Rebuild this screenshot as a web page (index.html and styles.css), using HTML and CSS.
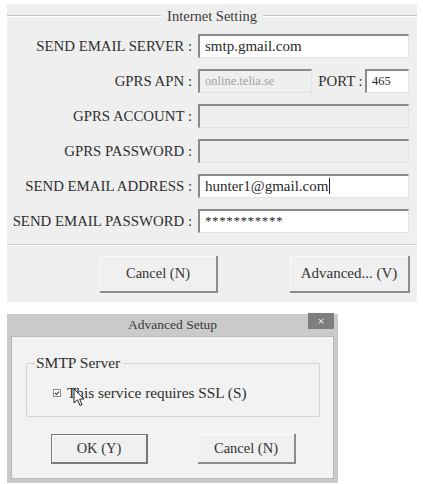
FILE: index.html
```html
<!DOCTYPE html>
<html lang="en">
<head>
    <meta charset="UTF-8">
    <meta name="viewport" content="width=device-width, initial-scale=1.0">
    <title>Internet Setting</title>
    <link rel="stylesheet" href="styles.css">
</head>
<body>
    <div class="settings">
        <div class="group-head">
            <span class="line"></span>
            <span class="group-title">Internet Setting</span>
            <span class="line"></span>
        </div>
        <div class="form">
            <label class="lbl">SEND EMAIL SERVER :</label>
            <div class="field">smtp.gmail.com</div>

            <label class="lbl">GPRS APN :</label>
            <div class="apn-row">
                <div class="field off apn">online.telia.se</div>
                <label class="lbl port-lbl">PORT :</label>
                <div class="field port">465</div>
            </div>

            <label class="lbl">GPRS ACCOUNT :</label>
            <div class="field off"></div>

            <label class="lbl">GPRS PASSWORD :</label>
            <div class="field off"></div>

            <label class="lbl">SEND EMAIL ADDRESS :</label>
            <div class="field"><span class="caret">hunter1@gmail.com</span></div>

            <label class="lbl">SEND EMAIL PASSWORD :</label>
            <div class="field pw">***********</div>
        </div>
        <div class="actions">
            <button class="btn wide">Cancel (N)</button>
            <button class="btn wide adv">Advanced... (V)</button>
        </div>
    </div>

    <div class="dialog">
        <div class="titlebar">
            <span></span>
            <span class="title">Advanced Setup</span>
            <span class="close">&#215;</span>
        </div>
        <div class="dlg-body">
            <fieldset class="smtp">
                <legend>SMTP Server</legend>
                <div class="check">
                    <svg class="box" width="8" height="8" viewBox="0 0 8 8">
                        <rect x="0.5" y="0.5" width="7" height="7" fill="#fff" stroke="#8a8a8a"/>
                        <path d="M2 4 L3.5 5.5 L6 2.5" fill="none" stroke="#555" stroke-width="1.2"/>
                    </svg>
                    <span class="check-text">This service requires SSL (S)</span>
                    <svg class="pointer" width="12" height="19" viewBox="0 0 12 19">
                        <path d="M1 1 L1 15 L4.5 11.8 L7 17.5 L9 16.6 L6.6 11 L11 11 Z" fill="#fff" stroke="#222" stroke-width="1"/>
                    </svg>
                </div>
            </fieldset>
            <div class="dlg-actions">
                <button class="btn small default">OK (Y)</button>
                <button class="btn small">Cancel (N)</button>
            </div>
        </div>
    </div>
</body>
</html>
```

FILE: styles.css
```css
* {
    margin: 0;
    padding: 0;
    box-sizing: border-box;
}

body {
    font-family: "Liberation Serif", "DejaVu Serif", serif;
    background: #fff;
    color: #333;
}

.settings {
    margin: 4px 0 0 7px;
    width: 410px;
    height: 298px;
    background: #efefef;
}

.group-head {
    display: flex;
    align-items: center;
    height: 24px;
    gap: 6px;
}

.group-head .line {
    flex: 1;
    height: 2px;
    border-top: 1px solid #c6c6c6;
    border-bottom: 1px solid #fff;
}

.group-title {
    font-size: 14.5px;
    color: #3a3a3a;
}

.form {
    display: grid;
    grid-template-columns: 185px 211px;
    grid-auto-rows: 24px;
    column-gap: 6px;
    row-gap: 11px;
    margin-top: 6px;
    padding-bottom: 11px;
    border-bottom: 1px solid #cfcfcf;
    box-shadow: 0 1px 0 #fff;
}

.lbl {
    font-size: 14.8px;
    color: #2e2e2e;
    text-align: right;
    align-self: center;
    white-space: nowrap;
}

.field {
    background: #fff;
    border-top: 2px solid #8a8a8a;
    border-left: 2px solid #8a8a8a;
    border-right: 1px solid #e2e2e2;
    border-bottom: 1px solid #e2e2e2;
    font-size: 15px;
    color: #2a2a2a;
    padding: 0 0 0 5px;
    line-height: 20px;
    white-space: nowrap;
}

.field.off {
    background: #efefef;
    color: #a3a3a3;
    font-size: 12.5px;
}

.apn-row {
    display: flex;
    align-items: stretch;
    justify-content: space-between;
}

.apn {
    width: 114px;
}

.port-lbl {
    margin-left: 4px;
}

.port {
    width: 44px;
    font-size: 12.5px;
}

.caret {
    border-right: 1px solid #222;
    padding-right: 1px;
}

.pw {
    font-size: 13px;
    letter-spacing: 0.6px;
}

.actions {
    display: flex;
    justify-content: flex-end;
    gap: 72px;
    padding: 11px 7px 0 0;
}

.btn {
    font-family: "Liberation Serif", "DejaVu Serif", serif;
    font-size: 14.5px;
    color: #333;
    background: #f0f0f0;
    border: none;
    border-right: 2px solid #8c8c8c;
    border-bottom: 2px solid #8c8c8c;
    box-shadow: inset 1px 1px 0 #fafafa;
}

.btn.wide {
    width: 118px;
    height: 37px;
}

.btn.adv {
    width: 120px;
    font-size: 15px;
}

.dialog {
    margin: 12px 0 0 7px;
    width: 331px;
    height: 169px;
    background: #cacaca;
    padding: 0 4px 4px;
    display: flex;
    flex-direction: column;
}

.titlebar {
    display: grid;
    grid-template-columns: 1fr auto 1fr;
    align-items: center;
    height: 22px;
}

.title {
    font-size: 13.5px;
    color: #3a3a3a;
}

.close {
    justify-self: end;
    align-self: start;
    width: 26px;
    height: 16px;
    margin-top: -1px;
    background: #7e7e7e;
    color: #f4f4f4;
    font-family: "DejaVu Sans", sans-serif;
    font-size: 9px;
    line-height: 16px;
    text-align: center;
}

.dlg-body {
    flex: 1;
    background: #f2f2f2;
    border: 1px solid #b8b8b8;
    padding: 17px 10px 0 14px;
}

.smtp {
    width: 294px;
    height: 63px;
    border: 1px solid #d2d2d2;
    border-radius: 2px;
    padding: 0 0 0 26px;
}

.smtp legend {
    font-size: 15.5px;
    color: #2e2e2e;
    margin-left: -18px;
    padding: 0 3px 0 1px;
}

.check {
    position: relative;
    display: flex;
    align-items: center;
    gap: 6px;
    margin-top: 12px;
}

.check-text {
    font-size: 15.3px;
    color: #2e2e2e;
}

.pointer {
    position: absolute;
    left: 20px;
    top: 4px;
}

.dlg-actions {
    display: flex;
    gap: 50px;
    margin-top: 17px;
    padding-left: 25px;
}

.btn.small {
    width: 98px;
    height: 30px;
}

.btn.default {
    width: 97px;
    border: 1px solid #7a7a7a;
    border-right-width: 2px;
    border-bottom-width: 2px;
}
```
